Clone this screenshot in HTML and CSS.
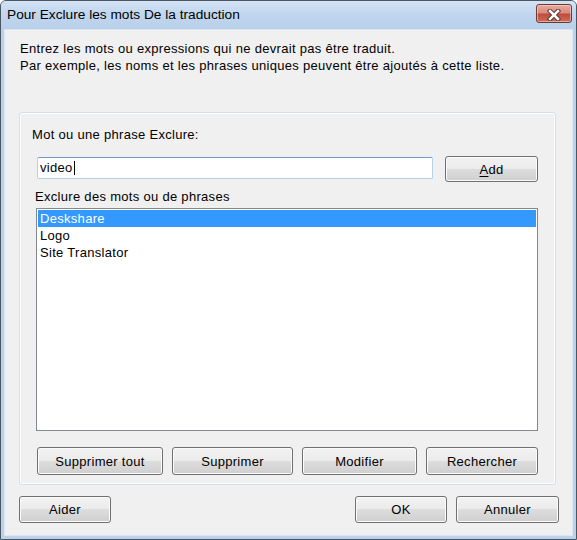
FILE: index.html
```html
<!DOCTYPE html>
<html lang="fr">
<head>
<meta charset="utf-8">
<title>Pour Exclure les mots De la traduction</title>
<link rel="stylesheet" href="styles.css">
</head>
<body>
<div class="window">
  <div class="titlebar">
    <span class="title">Pour Exclure les mots De la traduction</span>
    <button class="close" type="button" aria-label="Fermer">
      <svg width="14" height="12" viewBox="0 0 14 12">
        <path d="M3 2 L11 10 M11 2 L3 10" stroke="#4a2a26" stroke-width="4.4" stroke-linecap="square" fill="none"/>
        <path d="M3 2 L11 10 M11 2 L3 10" stroke="#ffffff" stroke-width="2.6" stroke-linecap="square" fill="none"/>
      </svg>
    </button>
  </div>
  <div class="client">
    <p class="intro">Entrez les mots ou expressions qui ne devrait pas être traduit.<br>Par exemple, les noms et les phrases uniques peuvent être ajoutés à cette liste.</p>
    <div class="group">
      <div class="label label-word">Mot ou une phrase Exclure:</div>
      <div class="input-row">
        <div class="textbox">video<span class="caret"></span></div>
        <button class="btn btn-add" type="button"><u>A</u>dd</button>
      </div>
      <div class="label label-list">Exclure des mots ou de phrases</div>
      <div class="list">
        <div class="item selected">Deskshare</div>
        <div class="item">Logo</div>
        <div class="item">Site Translator</div>
      </div>
      <div class="action-row">
        <button class="btn btn-remove-all" type="button">Supprimer tout</button>
        <button class="btn btn-remove" type="button">Supprimer</button>
        <button class="btn btn-edit" type="button">Modifier</button>
        <button class="btn btn-search" type="button">Rechercher</button>
      </div>
    </div>
    <div class="footer">
      <button class="btn btn-help" type="button">Aider</button>
      <button class="btn btn-ok" type="button">OK</button>
      <button class="btn btn-cancel" type="button">Annuler</button>
    </div>
  </div>
</div>
</body>
</html>
```
FILE: styles.css
```css
* {
  box-sizing: border-box;
}

html, body {
  margin: 0;
  padding: 0;
  width: 577px;
  height: 540px;
  overflow: hidden;
  background: #ffffff;
}

body {
  font-family: "Liberation Sans", Arial, sans-serif;
  font-size: 13px;
  font-weight: 400;
  letter-spacing: 0.3px;
  color: #000000;
}

.window {
  width: 577px;
  height: 540px;
  border: 1px solid #4b5663;
  border-radius: 6px 6px 0 0;
  background: #bcd2eb;
  padding: 0 3px 3px 3px;
  display: flex;
  flex-direction: column;
}

.titlebar {
  height: 28px;
  margin: 0 -3px;
  border-radius: 5px 5px 0 0;
  background: linear-gradient(#d3e3f5 0%, #c3d8ef 40%, #b8cfea 100%);
  display: flex;
  align-items: flex-start;
  flex-shrink: 0;
}

.title {
  font-size: 13.7px;
  letter-spacing: 0;
  line-height: 28px;
  padding-left: 6px;
  flex: 1;
  white-space: nowrap;
}

.close {
  width: 36px;
  height: 19px;
  margin: 3px 4px 0 0;
  padding: 0;
  border: 1px solid #6d3a33;
  border-radius: 3px;
  background: linear-gradient(#e6a99c 0%, #d68a7b 48%, #c04a3b 52%, #cc6c5c 100%);
  box-shadow: inset 0 0 0 1px rgba(255, 220, 210, 0.55);
  display: flex;
  align-items: center;
  justify-content: center;
}

.close svg {
  display: block;
  margin-top: 2px;
}

.client {
  flex: 1;
  border: 1px solid #dbe6f3;
  background: #f0f0f0;
  display: flex;
  flex-direction: column;
}

.intro {
  margin: 10px 0 0 0;
  padding-left: 15px;
  line-height: 17px;
  white-space: nowrap;
}

.group {
  margin: 38px 0 0 14px;
  width: 537px;
  height: 373px;
  border: 1px solid #d5dfe5;
  border-radius: 3px;
  box-shadow: inset 0 0 0 1px #ffffff;
  display: flex;
  flex-direction: column;
  align-items: flex-start;
}

.label {
  line-height: 17px;
  white-space: nowrap;
}

.label-word {
  margin: 13px 0 0 12px;
}

.input-row {
  margin-top: 13px;
  display: flex;
  align-items: flex-start;
}

.textbox {
  margin: 1px 0 0 17px;
  width: 396px;
  height: 22px;
  border: 1px solid #b5cfe7;
  border-top-color: #6f9bcb;
  border-radius: 2px;
  background: #ffffff;
  padding-left: 2px;
  line-height: 20px;
  display: flex;
  align-items: center;
}

.caret {
  display: inline-block;
  width: 1px;
  height: 14px;
  background: #000000;
  margin-left: 1px;
}

.btn {
  font-family: "Liberation Sans", Arial, sans-serif;
  font-size: 13px;
  font-weight: 400;
  letter-spacing: 0.3px;
  color: #000000;
  padding: 0;
  border: 1px solid #707070;
  border-radius: 3px;
  background: linear-gradient(#f2f2f2 0%, #ebebeb 50%, #dddddd 50%, #cfcfcf 100%);
  box-shadow: inset 0 0 0 1px #fbfbfb;
  display: flex;
  align-items: center;
  justify-content: center;
  flex-shrink: 0;
}

.btn u {
  text-decoration: underline;
  text-underline-offset: 2px;
}

.btn-add {
  margin-left: 12px;
  width: 93px;
  height: 26px;
}

.label-list {
  margin: 6px 0 0 15px;
}

.list {
  margin: 3px 0 0 16px;
  width: 502px;
  height: 223px;
  border: 1px solid #828790;
  background: #ffffff;
  padding: 1px;
}

.item {
  height: 17px;
  line-height: 17px;
  padding-left: 2px;
  white-space: nowrap;
}

.item.selected {
  background: #3399ff;
  color: #ffffff;
}

.action-row {
  margin: 16px 0 0 17px;
  display: flex;
  gap: 9px;
}

.action-row .btn {
  height: 28px;
}

.btn-remove-all { width: 126px; }
.btn-remove { width: 121px; }
.btn-edit { width: 115px; }
.btn-search { width: 112px; }

.footer {
  margin-top: 11px;
  padding: 0 13px 0 14px;
  display: flex;
  gap: 9px;
}

.footer .btn {
  height: 27px;
}

.btn-help { width: 92px; }
.btn-ok { width: 92px; margin-left: auto; }
.btn-cancel { width: 103px; }
```
